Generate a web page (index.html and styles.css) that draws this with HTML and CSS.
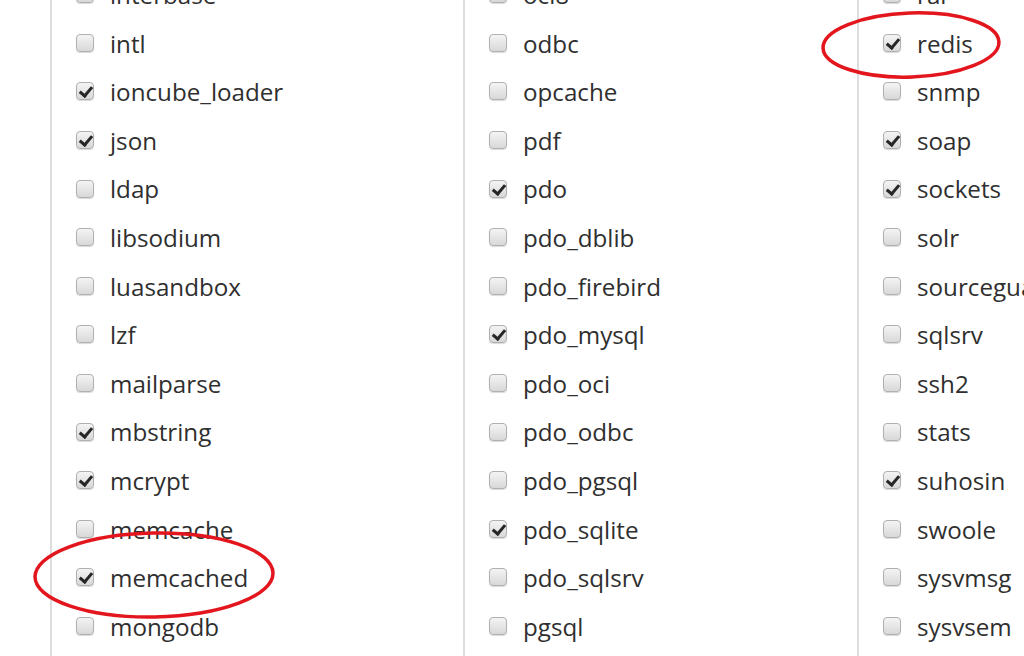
FILE: index.html
```html
<!DOCTYPE html>
<html lang="en">

<head>
    <meta charset="UTF-8">
    <title>PHP Extensions</title>
    <link rel="stylesheet" href="styles.css">
</head>

<body>
    <div class="ext-box">
        <ul class="ext-col col-1">
            <li><i class="cb"></i>interbase</li>
            <li><i class="cb"></i>intl</li>
            <li><i class="cb on"></i>ioncube_loader</li>
            <li><i class="cb on"></i>json</li>
            <li><i class="cb"></i>ldap</li>
            <li><i class="cb"></i>libsodium</li>
            <li><i class="cb"></i>luasandbox</li>
            <li><i class="cb"></i>lzf</li>
            <li><i class="cb"></i>mailparse</li>
            <li><i class="cb on"></i>mbstring</li>
            <li><i class="cb on"></i>mcrypt</li>
            <li><i class="cb"></i>memcache</li>
            <li><i class="cb on"></i>memcached</li>
            <li><i class="cb"></i>mongodb</li>
        </ul>
        <ul class="ext-col col-2">
            <li><i class="cb"></i>oci8</li>
            <li><i class="cb"></i>odbc</li>
            <li><i class="cb"></i>opcache</li>
            <li><i class="cb"></i>pdf</li>
            <li><i class="cb on"></i>pdo</li>
            <li><i class="cb"></i>pdo_dblib</li>
            <li><i class="cb"></i>pdo_firebird</li>
            <li><i class="cb on"></i>pdo_mysql</li>
            <li><i class="cb"></i>pdo_oci</li>
            <li><i class="cb"></i>pdo_odbc</li>
            <li><i class="cb"></i>pdo_pgsql</li>
            <li><i class="cb on"></i>pdo_sqlite</li>
            <li><i class="cb"></i>pdo_sqlsrv</li>
            <li><i class="cb"></i>pgsql</li>
        </ul>
        <ul class="ext-col col-3">
            <li><i class="cb"></i>rar</li>
            <li><i class="cb on"></i>redis</li>
            <li><i class="cb"></i>snmp</li>
            <li><i class="cb on"></i>soap</li>
            <li><i class="cb on"></i>sockets</li>
            <li><i class="cb"></i>solr</li>
            <li><i class="cb"></i>sourceguardian</li>
            <li><i class="cb"></i>sqlsrv</li>
            <li><i class="cb"></i>ssh2</li>
            <li><i class="cb"></i>stats</li>
            <li><i class="cb on"></i>suhosin</li>
            <li><i class="cb"></i>swoole</li>
            <li><i class="cb"></i>sysvmsg</li>
            <li><i class="cb"></i>sysvsem</li>
        </ul>

        <!-- 红圈标注 -->
        <svg class="mark" width="1024" height="656" viewBox="0 0 1024 656">
            <ellipse cx="154" cy="575" rx="119" ry="42" transform="rotate(-1 154 575)" />
            <ellipse cx="911" cy="45" rx="88" ry="32" transform="rotate(-2 911 45)" />
        </svg>
    </div>
</body>

</html>
```

FILE: styles.css
```css
* {
    margin: 0;
    padding: 0;
}

ul li {
    list-style: none;
}

html,
body {
    height: 100%;
    overflow: hidden;
    background: #fff;
}

body {
    font-family: "Open Sans", "Noto Sans", sans-serif;
    font-size: 24.2px;
    color: #2f2f2f;
}

.ext-box {
    display: flex;
    height: 656px;
    padding-left: 50px;
    margin-top: -29px;
    position: relative;
}

.ext-col {
    border-left: 2px solid #ddd;
    flex-shrink: 0;
    height: 720px;
    white-space: nowrap;
    overflow: hidden;
}

.col-1 {
    width: 411px;
}

.col-2 {
    width: 392px;
}

.col-3 {
    flex: 1;
}

.ext-col li {
    display: flex;
    align-items: center;
    height: 48.6px;
    line-height: 48.6px;
    padding-left: 24px;
}

.cb {
    width: 16px;
    height: 16px;
    border: 1px solid #b0b0b0;
    border-radius: 4px;
    background: linear-gradient(#f4f4f4, #d8d8d8);
    box-shadow: 0 1px 1px rgba(0, 0, 0, 0.15);
    margin-right: 16px;
    flex-shrink: 0;
    position: relative;
    top: -1px;
}

.cb.on::after {
    content: "";
    position: absolute;
    left: 5px;
    top: 1px;
    width: 5px;
    height: 10px;
    border: solid #262626;
    border-width: 0 3px 3px 0;
    transform: rotate(40deg);
}

.mark {
    position: absolute;
    left: 0;
    top: 29px;
    pointer-events: none;
}

.mark ellipse {
    fill: none;
    stroke: #e3161e;
    stroke-width: 3.5;
}
```
